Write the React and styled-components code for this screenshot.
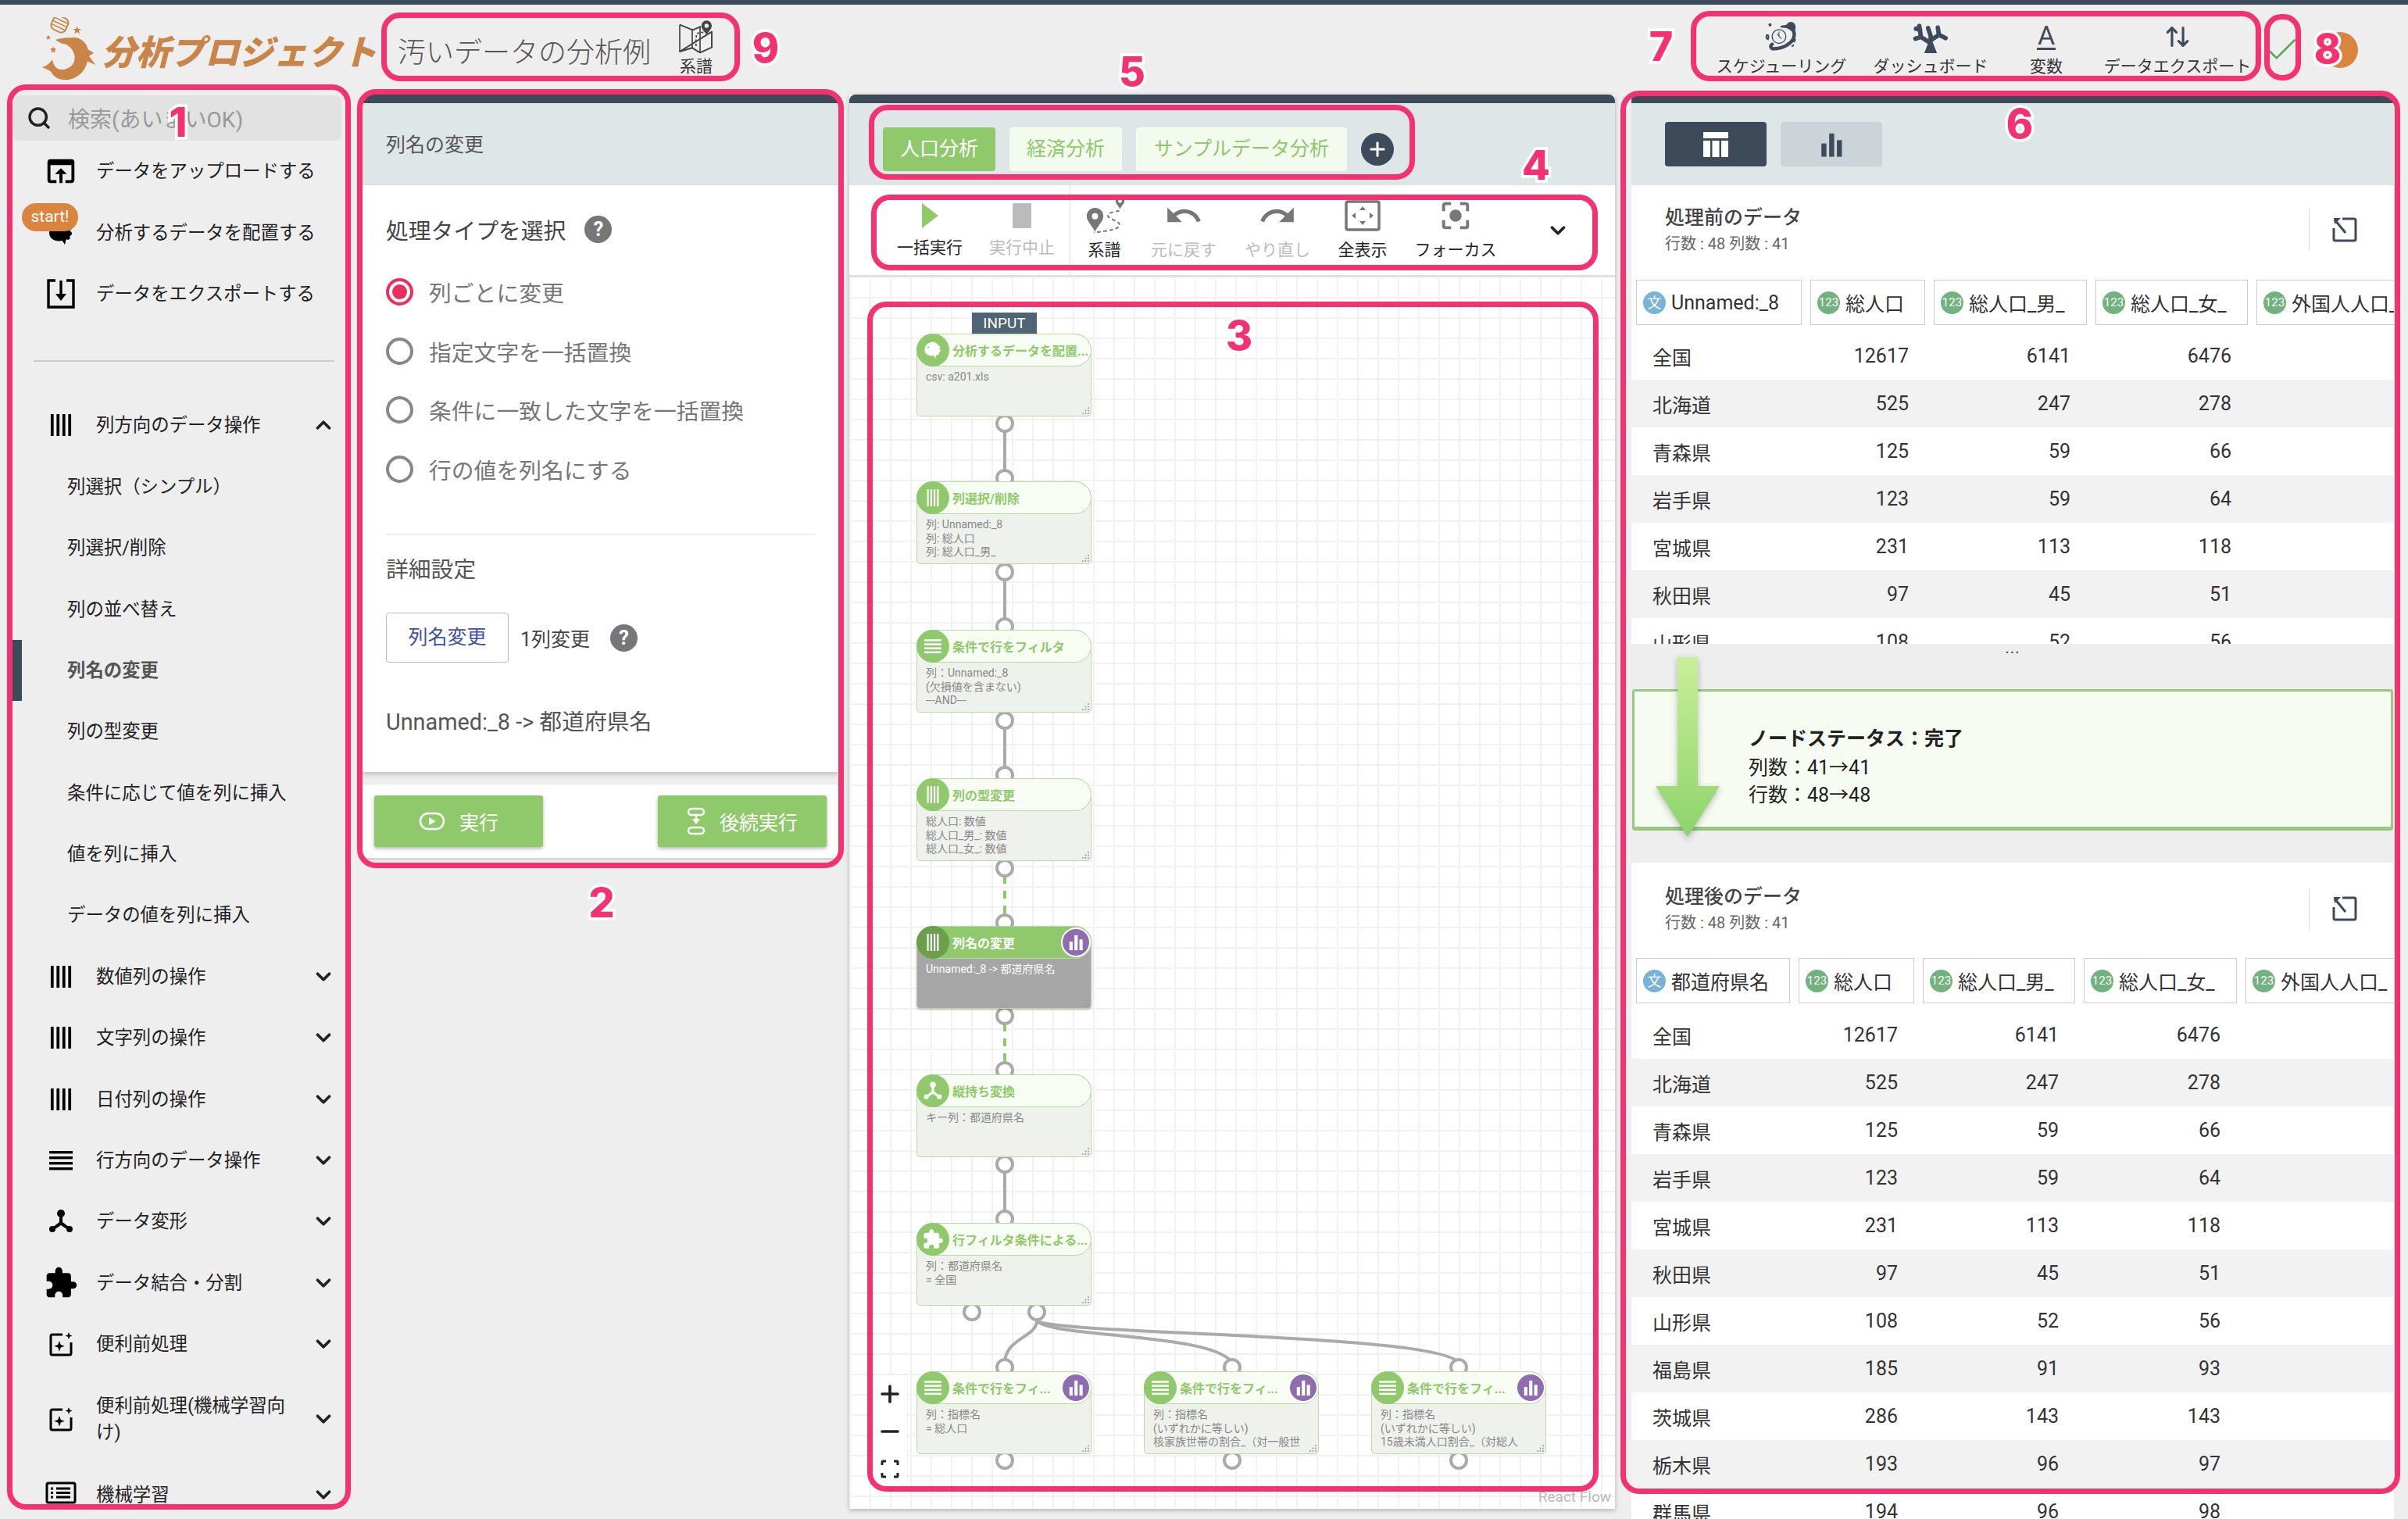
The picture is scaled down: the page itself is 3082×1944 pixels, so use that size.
import React from 'react'
import styled, { createGlobalStyle } from 'styled-components'
import { ChevronDown, ChevronUp, Plus, Minus, Check, ArrowUpDown, Search } from 'lucide-react'
import { MdOpenInBrowser, MdUndo, MdRedo, MdCenterFocusStrong, MdExtension } from 'react-icons/md'

const Global = createGlobalStyle`
  html, body { margin:0; padding:0; background:#eeeeee; }
  body { font-family:Roboto, "Noto Sans CJK JP", sans-serif; color:#222; overflow:hidden; }
  * { box-sizing:border-box; }
`

const DARK = '#3d4a59'
const GREEN = '#8fc96b'
const PINK = '#f5326f'

const Page = styled.div`
  position:relative;
  width:3082px;
  height:1944px;
  overflow:hidden;
  display:flex;
  flex-direction:column;
  background:#eeeeee;
`
const TopStrip = styled.div`
  height:6px;
  flex:none;
  background:${DARK};
`
const Header = styled.header`
  height:115px;
  flex:none;
  display:flex;
  align-items:center;
  padding:0 64px 0 46px;
`
const LogoText = styled.div`
  width:379px;
  font-size:44px;
  font-weight:900;
  font-style:italic;
  color:#c98548;
  white-space:nowrap;
`
const ProjectTitle = styled.div`
  width:343px;
  font-size:36px;
  font-weight:300;
  color:#555;
  white-space:nowrap;
`
const HeadTool = styled.div`
  width:${p => p.$w}px;
  padding-bottom:4px;
  display:flex;
  flex-direction:column;
  align-items:center;
  font-size:21px;
  line-height:30px;
  color:#333;
  white-space:nowrap;
`
const HeadIcon = styled.div`
  height:46px;
  display:flex;
  align-items:center;
  justify-content:center;
  color:${DARK};
`
const LetterIcon = styled.span`
  font-size:34px;
  line-height:32px;
  color:${DARK};
  border-bottom:3px solid ${DARK};
  padding:0 1px;
`
const HeadTools = styled.div`
  margin-left:auto;
  display:flex;
  align-items:center;
`
const Avatar = styled.div`
  width:46px;
  height:46px;
  margin-left:35px;
  border-radius:50%;
  background:#d9843f;
`
const CheckSlot = styled.div`
  width:34px;
  display:flex;
  justify-content:center;
  color:#4fa85a;
  svg { flex:none; }
`
const Main = styled.main`
  flex:1;
  min-height:0;
  display:flex;
  padding-left:14px;
`

/* sidebar */
const Sidebar = styled.nav`
  width:436px;
  flex:none;
  padding-top:1px;
`
const SearchBox = styled.div`
  height:58px;
  margin:0 13px 0 3px;
  display:flex;
  align-items:center;
  gap:21px;
  padding-left:17px;
  background:#e2e2e2;
  border-radius:8px;
  color:#999;
  font-size:28px;
  white-space:nowrap;
  svg { color:#222; }
`
const MenuRow = styled.div`
  position:relative;
  height:${p => p.$h || 78.4}px;
  display:flex;
  align-items:center;
  padding-right:21px;
  border-left:14px solid ${p => (p.$active ? DARK : 'transparent')};
  font-size:23.4px;
  line-height:34px;
  color:${p => (p.$active ? '#555' : '#222')};
  font-weight:${p => (p.$active ? 700 : 400)};
`
const MenuIcon = styled.div`
  width:60px;
  flex:none;
  display:flex;
  justify-content:center;
  margin-right:15px;
  margin-left:20px;
  color:#000;
`
const MenuLabel = styled.div`
  flex:1;
  white-space:${p => (p.$wrap ? 'normal' : 'nowrap')};
  padding-left:${p => (p.$sub ? 58 : 0)}px;
  padding-right:${p => (p.$wrap ? 8 : 0)}px;
`
const MenuRule = styled.hr`
  height:2px;
  border:none;
  margin:46px 22px 42px 29px;
  background:#cccccc;
`
const StartBadge = styled.div`
  position:absolute;
  left:0;
  top:2px;
  width:72px;
  height:36px;
  border-radius:18px;
  background:#d9843f;
  color:#fff;
  font-size:21px;
  line-height:35px;
  text-align:center;
  z-index:1;
`

/* settings panel */
const PanelHead = styled.div`
  height:116px;
  flex:none;
  border-top:11px solid ${DARK};
  border-radius:8px 8px 0 0;
  background:#dfe6e8;
`
const SettingsColumn = styled.section`
  width:609px;
  margin-left:14px;
  flex:none;
`
const SettingsHead = styled(PanelHead)`
  display:flex;
  align-items:center;
  padding-left:30px;
  padding-bottom:4px;
  font-size:25px;
  color:#555;
`
const SettingsBody = styled.div`
  height:751px;
  padding:34px 30px 0;
  background:#fff;
  box-shadow:0 3px 6px rgba(0,0,0,.2);
`
const TypeTitle = styled.div`
  display:flex;
  align-items:center;
  gap:24px;
  height:44px;
  font-size:28.8px;
  color:#444;
`
const HelpDot = styled.span`
  width:35px;
  height:35px;
  margin-left:${p => p.$left || 0}px;
  border-radius:50%;
  background:#777;
  color:#fff;
  font-size:26px;
  font-weight:700;
  line-height:35px;
  text-align:center;
  flex:none;
`
const RadioList = styled.div`
  margin-top:21px;
`
const RadioRow = styled.div`
  height:75.5px;
  display:flex;
  align-items:center;
  gap:20px;
  font-size:28.8px;
  color:#777;
`
const RadioMark = styled.span`
  width:35px;
  height:35px;
  flex:none;
  border-radius:50%;
  border:4px solid ${p => (p.$on ? '#e8305f' : '#888')};
  display:flex;
  align-items:center;
  justify-content:center;
  &::after {
    content:'';
    width:19px;
    height:19px;
    border-radius:50%;
    background:${p => (p.$on ? '#e8305f' : 'transparent')};
  }
`
const Rule = styled.hr`
  height:2px;
  border:none;
  margin:45px 0 0;
  background:#eeeeee;
`
const DetailTitle = styled.div`
  margin-top:24px;
  height:40px;
  line-height:40px;
  font-size:28.8px;
  color:#555;
`
const DetailRow = styled.div`
  margin-top:35px;
  display:flex;
  align-items:center;
  font-size:25px;
  color:#444;
`
const OutlineButton = styled.div`
  width:157px;
  height:64px;
  margin-right:15px;
  border:1px solid #bbb;
  border-radius:4px;
  color:#3f51a5;
  line-height:62px;
  text-align:center;
`
const RenameText = styled.div`
  margin-top:56px;
  line-height:40px;
  font-size:28.8px;
  color:#555;
`
const SettingsFoot = styled.div`
  margin-top:16px;
  height:94px;
  padding:14px 15px;
  display:flex;
  justify-content:space-between;
  background:#fff;
  box-shadow:0 2px 3px rgba(0,0,0,.15);
`
const RunButton = styled.div`
  width:216px;
  height:66px;
  display:flex;
  align-items:center;
  justify-content:center;
  gap:18px;
  border-radius:3px;
  background:${GREEN};
  color:#fff;
  font-size:25px;
  box-shadow:0 2px 5px rgba(0,0,0,.3);
`

/* flow canvas */
const FlowColumn = styled.section`
  width:980px;
  margin-left:14px;
  flex:none;
  display:flex;
  flex-direction:column;
  height:1810px;
  background:#fff;
  box-shadow:0 2px 6px rgba(0,0,0,.25);
`
const TabBar = styled(PanelHead)`
  display:flex;
  align-items:center;
  gap:18px;
  padding:13px 0 0 43px;
`
const Tab = styled.div`
  width:${p => p.$w}px;
  height:56px;
  border-radius:4px;
  background:${p => (p.$active ? GREEN : '#f3faee')};
  color:${p => (p.$active ? '#fff' : GREEN)};
  font-size:25px;
  line-height:55px;
  text-align:center;
`
const AddTab = styled.div`
  width:42px;
  height:42px;
  border-radius:50%;
  background:${DARK};
  color:#fff;
  display:flex;
  align-items:center;
  justify-content:center;
`
const Toolbar = styled.div`
  height:117px;
  flex:none;
  display:flex;
  border-bottom:2px solid #ddd;
`
const ToolGroup = styled.div`
  display:flex;
  padding-left:${p => p.$pad || 0}px;
  width:${p => p.$w}px;
  ${p => p.$divide && 'border-right:1px solid #ddd;'}
`
const ToolItem = styled.div`
  width:${p => p.$w}px;
  padding-top:13px;
  display:flex;
  flex-direction:column;
  align-items:center;
  white-space:nowrap;
  font-size:21px;
  line-height:30px;
  color:${p => (p.$off ? '#bbb' : '#222')};
`
const ToolIcon = styled.div`
  height:52px;
  display:flex;
  align-items:center;
  justify-content:center;
  color:${p => p.$color || '#777'};
  margin-bottom:${p => p.$low || 0}px;
`
const ToolChevron = styled.div`
  margin-left:44px;
  align-self:center;
  color:#222;
  display:flex;
`
const Canvas = styled.div`
  position:relative;
  flex:1;
  overflow:hidden;
  background-color:#fff;
  background-image:
    linear-gradient(#f2f2f2 2px, transparent 2px),
    linear-gradient(90deg, #f2f2f2 2px, transparent 2px);
  background-size:26px 26px;
`
const EdgeLayer = styled.svg`
  position:absolute;
  left:0;
  top:0;
  width:100%;
  height:100%;
`
const Handle = styled.div`
  position:absolute;
  left:${p => p.$x - 12}px;
  top:${p => p.$y - 12}px;
  width:24px;
  height:24px;
  border-radius:50%;
  border:4px solid #aaa;
  background:#fff;
`
const NodeBox = styled.div`
  position:absolute;
  left:${p => p.$x}px;
  top:${p => p.$y}px;
  width:224px;
  height:106px;
  border:1px solid #b9d9a6;
  border-radius:21px 21px 5px 5px;
  background:${p => (p.$on ? '#a6a6a6' : '#eff1ed')};
  color:${p => (p.$on ? '#fff' : '#888')};
  box-shadow:${p => (p.$on ? '0 1px 3px rgba(0,0,0,.3)' : 'none')};
`
const NodeHead = styled.div`
  height:42px;
  margin:-1px -1px 0;
  display:flex;
  align-items:center;
  gap:4px;
  border:1px solid #b9d9a6;
  border-radius:21px;
  background:${p => (p.$on ? GREEN : '#f7fdf2')};
  color:${p => (p.$on ? '#fff' : GREEN)};
  font-size:16px;
  font-weight:700;
  white-space:nowrap;
`
const NodeIcon = styled.div`
  width:42px;
  height:42px;
  margin:-1px 0 -1px -1px;
  flex:none;
  border-radius:50%;
  background:${p => (p.$on ? '#6b9f4c' : GREEN)};
  color:#fff;
  display:flex;
  align-items:center;
  justify-content:center;
`
const ChartBadge = styled.div`
  width:38px;
  height:38px;
  margin-left:auto;
  flex:none;
  border-radius:50%;
  border:2px solid #fff;
  background:#8e6cb0;
  color:#fff;
  display:flex;
  align-items:center;
  justify-content:center;
`
const NodeText = styled.div`
  padding:5px 0 0 11px;
  font-size:14px;
  line-height:17.5px;
  white-space:nowrap;
  overflow:hidden;
  margin-right:18px;
`
const NodeGrip = styled.svg`
  position:absolute;
  right:1px;
  bottom:1px;
`
const InputTag = styled.div`
  position:absolute;
  left:157px;
  top:46px;
  width:83px;
  height:27px;
  background:#4f6474;
  color:#fff;
  font-size:19px;
  line-height:27px;
  text-align:center;
`
const ZoomControls = styled.div`
  position:absolute;
  left:30px;
  top:1406px;
  width:44px;
  height:144px;
  display:flex;
  flex-direction:column;
  background:#fff;
  box-shadow:0 0 2px rgba(0,0,0,.1);
`
const ZoomButton = styled.div`
  flex:1;
  display:flex;
  align-items:center;
  justify-content:center;
  color:#222;
`
const Attribution = styled.div`
  position:absolute;
  right:5px;
  bottom:4px;
  font-size:19px;
  color:#bbb;
`

/* data panel */
const DataColumn = styled.section`
  width:976px;
  margin-left:21px;
  flex:none;
  position:relative;
  display:flex;
  flex-direction:column;
  overflow:hidden;
`
const ToggleBar = styled(PanelHead)`
  display:flex;
  gap:18px;
  padding:24px 0 0 43px;
`
const ToggleButton = styled.div`
  width:130px;
  height:57px;
  border-radius:4px;
  background:${p => (p.$active ? DARK : '#ccd4da')};
  color:${p => (p.$active ? '#fff' : DARK)};
  display:flex;
  align-items:center;
  justify-content:center;
`
const TableSection = styled.div`
  height:${p => p.$h}px;
  flex:none;
  overflow:hidden;
  background:#fff;
`
const TableHeader = styled.div`
  height:${p => p.$h}px;
  display:flex;
  align-items:center;
  padding:0 47px ${p => p.$bottom}px 43px;
`
const TableTitle = styled.div`
  font-size:25px;
  line-height:34px;
  font-weight:500;
  color:#444;
`
const TableSub = styled.div`
  font-size:20px;
  line-height:28px;
  margin-top:2px;
  color:#666;
`
const ExpandSlot = styled.div`
  margin-left:auto;
  width:32px;
  height:53px;
  border-left:1px solid #ddd;
  padding-left:29px;
  box-sizing:content-box;
  display:flex;
  align-items:center;
  color:${DARK};
`
const HeadRow = styled.div`
  display:flex;
  gap:11px;
  padding-left:6px;
  white-space:nowrap;
`
const ColHead = styled.div`
  width:${p => p.$w}px;
  height:58px;
  flex:none;
  display:flex;
  align-items:center;
  gap:7px;
  padding-left:8px;
  border:1px solid #ccc;
  font-size:25px;
  color:#333;
  overflow:hidden;
`
const TypeBadge = styled.span`
  width:29px;
  height:29px;
  flex:none;
  border-radius:50%;
  background:${p => (p.$text ? '#7ab3d9' : '#72b27f')};
  color:#fff;
  font-size:${p => (p.$text ? 18 : 15)}px;
  line-height:29px;
  text-align:center;
`
const DataRows = styled.div`
  margin-top:${p => p.$top}px;
`
const DataRow = styled.div`
  height:61px;
  display:flex;
  gap:11px;
  padding-left:6px;
  align-items:center;
  font-size:25px;
  color:#333;
  &:nth-child(even) { background:#f2f2f2; }
`
const DataCell = styled.div`
  width:${p => p.$w}px;
  flex:none;
  padding:0 21px;
  text-align:${p => (p.$num ? 'right' : 'left')};
`
const StatusArea = styled.div`
  position:relative;
  height:280px;
  flex:none;
  padding-top:58px;
`
const Ellipsis = styled.div`
  position:absolute;
  left:0;
  right:0;
  top:-5px;
  text-align:center;
  font-size:20px;
  line-height:20px;
  letter-spacing:1px;
  color:#444;
`
const StatusBox = styled.div`
  height:181px;
  margin:0 1px;
  padding:18px 0 0 146px;
  display:flex;
  flex-direction:column;
  justify-content:center;
  background:#f6fcf2;
  border:3px solid #98c97f;
  border-bottom-width:5px;
  border-radius:4px;
  font-size:25px;
  line-height:35px;
  color:#222;
`
const StatusTitle = styled.div`
  font-weight:700;
  line-height:38px;
`
const StatusArrow = styled.svg`
  position:absolute;
  left:22px;
  top:1px;
  filter:drop-shadow(0 3px 4px rgba(0,0,0,.25));
`

/* annotations */
const Mark = styled.div`
  position:absolute;
  left:${p => p.$x}px;
  top:${p => p.$y}px;
  width:${p => p.$w}px;
  height:${p => p.$h}px;
  border:7px solid ${PINK};
  border-radius:${p => p.$r || 24}px;
  pointer-events:none;
`
const MarkNumber = styled.div`
  position:absolute;
  left:${p => p.$x}px;
  top:${p => p.$y}px;
  transform:translate(-50%, -50%);
  font-family:Inter, sans-serif;
  font-size:52px;
  font-weight:800;
  line-height:1;
  color:${PINK};
  -webkit-text-stroke:7px #fff;
  paint-order:stroke fill;
`

/* drawings */
const Columns = ({ size = 30, height }) => (
  <svg width={size} height={height || size} viewBox="0 0 30 30" preserveAspectRatio="none" fill="currentColor">
    <rect x="1" y="0" width="4" height="30" /><rect x="9" y="0" width="4" height="30" />
    <rect x="17" y="0" width="4" height="30" /><rect x="25" y="0" width="4" height="30" />
  </svg>
)
const Rows = ({ size = 30 }) => (
  <svg width={size} height={size} viewBox="0 0 30 30" fill="currentColor">
    <rect x="0" y="3" width="30" height="3.4" /><rect x="0" y="10" width="30" height="3.4" />
    <rect x="0" y="17" width="30" height="3.4" /><rect x="0" y="24" width="30" height="3.4" />
  </svg>
)
const Branch = ({ size = 34 }) => (
  <svg width={size} height={size} viewBox="0 0 34 34" fill="currentColor">
    <circle cx="17" cy="7" r="5" /><circle cx="6" cy="27" r="4" /><circle cx="28" cy="27" r="4" />
    <path d="M15 10h4v8l9 7-2 3-9-6-9 6-2-3 9-7z" />
  </svg>
)
const Sunfish = ({ size = 30, eye = 'transparent' }) => (
  <svg width={size} height={size} viewBox="0 0 24 24" fill="currentColor">
    <path d="M3 12C3 6 8 3 13 3c2 0 2 2 4 2 1 1 0 2 2 2.500 2 .5 1 2.500-.5 3 2.500.5 2.500 3.500 0 4 1.500 1.500-.5 3.500-2.500 2.500l-1 4-2-3c-5 1-10-1-10-6z" />
    <circle cx="7" cy="9" r="1" fill={eye} />
  </svg>
)
const Sparkle = () => (
  <svg width="34" height="34" viewBox="0 0 34 34" fill="none" stroke="currentColor" strokeWidth="3">
    <path d="M19 5H6a2 2 0 0 0-2 2v22a2 2 0 0 0 2 2h22a2 2 0 0 0 2-2V15" />
    <path fill="currentColor" stroke="none" d="M15 13l1.800 5 5 1.800-5 1.800-1.800 5-1.800-5-5-1.800 5-1.800zM27 2l1.200 3.300 3.300 1.200-3.300 1.200L27 11l-1.200-3.300-3.300-1.200 3.300-1.200z" />
  </svg>
)
const Monitor = () => (
  <svg width="40" height="34" viewBox="0 0 40 34" fill="none" stroke="currentColor" strokeWidth="3">
    <rect x="2" y="2" width="36" height="25" rx="2" />
    <path d="M13 31h14" strokeWidth="4" />
    <path d="M14 9h18M14 14.500h18M14 20h18M7 9h3M7 14.500h3M7 20h3" />
  </svg>
)
const ExportBox = () => (
  <svg width="38" height="40" viewBox="0 0 38 40" fill="none" stroke="currentColor" strokeWidth="3.400">
    <path d="M12 3H3v34h32V3h-9" />
    <path d="M19 3v20" />
    <path fill="currentColor" stroke="none" d="M12 20h14l-7 9z" />
  </svg>
)
const Bars = ({ size = 22 }) => (
  <svg width={size} height={size} viewBox="0 0 24 24" fill="currentColor">
    <rect x="3" y="11" width="4.500" height="12" /><rect x="10" y="2" width="4.500" height="21" /><rect x="17" y="8" width="4.500" height="15" />
  </svg>
)
const TableGlyph = () => (
  <svg width="36" height="36" viewBox="0 0 36 36" fill="currentColor">
    <path d="M3 2h30a1 1 0 0 1 1 1v7H2V3a1 1 0 0 1 1-1z" />
    <path d="M2 13h9v21H3a1 1 0 0 1-1-1zM13.500 13h9v21h-9zM25 13h9v20a1 1 0 0 1-1 1h-8z" />
  </svg>
)
const Expand = () => (
  <svg width="32" height="32" viewBox="0 0 32 32" fill="none" stroke="currentColor" strokeWidth="3">
    <path d="M13 2h15a2 2 0 0 1 2 2v24a2 2 0 0 1-2 2H4a2 2 0 0 1-2-2V14" />
    <path d="M3 3l14 17" />
    <path fill="currentColor" stroke="none" d="M2 1h9L3 9z" />
  </svg>
)
const Logo = () => (
  <svg width="84" height="84" viewBox="20 30 220 220" fill="#c98548">
    <g transform="rotate(25 100 52)" fill="none" stroke="#c98548" strokeWidth="5">
      <rect x="74" y="28" width="52" height="50" rx="16" />
      <path d="M74 40h52M74 52h52M74 64h52" strokeWidth="4" />
    </g>
    <path d="M158 60l4 9 10 1-8 6 3 10-9-6-9 6 3-10-8-6 10-1zM62 89l2 6 6 1-5 4 2 6-5-4-6 4 2-6-5-4 6-1zM78 128l3 7 8 1-6 5 2 8-7-4-7 4 2-8-6-5 8-1z" />
    <path d="M85 105C105 100 125 98 150 98c25 2 40 22 45 40l19 12-16 10 22 30-28-12c-4 27-27 57-67 62-25 2-45-8-55-28-10-7-20-9-30-15 15-2 25-12 35-25 3 18 13 33 30 34 25 0 45-16 45-41 0-20-15-37-32-45-13 0-23-8-33-15z" />
  </svg>
)
const MapIcon = () => (
  <svg width="50" height="46" viewBox="45 5 150 138" fill="none" stroke="#444" strokeWidth="6">
    <path d="M57 28l50 20 28-12v-3M180 55v60l-45 20-30-18-48 14z" strokeLinejoin="round" />
    <path d="M57 28v103M105 48v70M135 36v98" strokeWidth="5" />
    <path d="M120 110c-2-20 0-35 2-45 4-8 20-8 30-8" strokeDasharray="9 7" strokeWidth="5" />
    <path fill="#444" stroke="none" fillRule="evenodd" d="M160 12a20 20 0 0 1 20 20c0 12-12 22-20 35-8-13-20-23-20-35a20 20 0 0 1 20-20zm0 12a8 8 0 1 0 0 16 8 8 0 0 0 0-16z" />
  </svg>
)
const RouteIcon = () => (
  <svg width="56" height="50" viewBox="40 10 165 150" fill="none" stroke="#777" strokeWidth="6">
    <path d="M178 66c-15 4-42 6-44 18-2 14 46 20 46 36 0 18-50 24-100 30" strokeDasharray="14 10" />
    <path fill="#777" stroke="none" fillRule="evenodd" d="M85 55a32 32 0 0 1 32 32c0 20-22 36-32 60-10-24-32-40-32-60a32 32 0 0 1 32-32zm0 20a12 12 0 1 0 0 24 12 12 0 0 0 0-24z" />
    <path fill="#777" stroke="none" fillRule="evenodd" d="M181 12a17 17 0 0 1 17 17c0 10-11 18-17 31-6-13-17-21-17-31a17 17 0 0 1 17-17zm0 10a7 7 0 1 0 0 14 7 7 0 0 0 0-14z" />
  </svg>
)
const FitIcon = () => (
  <svg width="46" height="40" viewBox="0 0 46 40" fill="#777">
    <rect x="2" y="2" width="42" height="36" rx="2" fill="none" stroke="#777" strokeWidth="3.500" />
    <path d="M23 8l4 5h-8zM23 32l4-5h-8zM9 20l5-4v8zM37 20l-5-4v8z" />
  </svg>
)
const Seahorse = () => (
  <svg width="44" height="42" viewBox="0 0 130 122" fill="none" stroke={DARK}>
    <path d="M98 26c24 14 18 46-3 60-15 14-40 20-55 20-15 3-20-11-10-16" strokeWidth="13" strokeLinecap="round" />
    <path fill={DARK} stroke="none" d="M62 20l22-4c6-12 24-16 32-2 6 12 2 24-8 30-8-8-16-14-26-16l-20-2z" />
    <circle cx="56" cy="60" r="26" strokeWidth="4" />
    <path d="M56 42v18l10 8M50 50l6 10" strokeWidth="3" />
    <circle cx="22" cy="16" r="6" fill={DARK} stroke="none" />
    <path d="M10 55c6-4 8 6 4 16-6-2-8-10-4-16zM118 70l-6 12M112 92l-8 6" strokeWidth="6" />
  </svg>
)
const Coral = () => (
  <svg width="46" height="42" viewBox="0 0 130 118" fill="none" stroke={DARK} strokeWidth="16" strokeLinecap="round" strokeLinejoin="round">
    <path d="M65 105V55M65 82L30 60 10 66M30 60L24 20M27 34L12 30M65 55L56 28M65 72l30-20-4-26M95 52l24 12" />
    <path fill={DARK} stroke="none" d="M42 118h46L74 82H56z" />
  </svg>
)
const PlayPill = () => (
  <svg width="34" height="24" viewBox="0 0 34 24" fill="none" stroke="#fff" strokeWidth="2.500">
    <rect x="2" y="2" width="30" height="20" rx="10" />
    <path fill="#fff" stroke="none" d="M13 7l9 5-9 5z" />
  </svg>
)
const FlowPill = () => (
  <svg width="24" height="36" viewBox="0 0 24 36" fill="none" stroke="#fff" strokeWidth="2.500">
    <rect x="2" y="2" width="20" height="8" rx="4" /><rect x="2" y="26" width="20" height="8" rx="4" />
    <path d="M12 10v6" /><path fill="#fff" stroke="none" d="M7 15h10l-5 7z" />
  </svg>
)

const OX = 1087
const OY = 354
const nodes = [
  { title: '分析するデータを配置...', icon: 'fish', lines: ['csv: a201.xls'], x: 1173, y: 427 },
  { title: '列選択/削除', icon: 'cols', lines: ['列: Unnamed:_8', '列: 総人口', '列: 総人口_男_'], x: 1173, y: 616 },
  { title: '条件で行をフィルタ', icon: 'rows', lines: ['列：Unnamed:_8', '(欠損値を含まない)', '---AND---'], x: 1173, y: 806 },
  { title: '列の型変更', icon: 'cols', lines: ['総人口: 数値', '総人口_男_: 数値', '総人口_女_: 数値'], x: 1173, y: 996 },
  { title: '列名の変更', icon: 'cols', lines: ['Unnamed:_8 -> 都道府県名'], x: 1173, y: 1185, on: true, chart: true },
  { title: '縦持ち変換', icon: 'branch', lines: ['キー列：都道府県名'], x: 1173, y: 1375 },
  { title: '行フィルタ条件による...', icon: 'puzzle', lines: ['列：都道府県名', '= 全国'], x: 1173, y: 1565 },
  { title: '条件で行をフィ...', icon: 'rows', lines: ['列：指標名', '= 総人口'], x: 1173, y: 1755, chart: true },
  { title: '条件で行をフィ...', icon: 'rows', lines: ['列：指標名', '(いずれかに等しい)', '核家族世帯の割合_（対一般世'], x: 1464, y: 1755, chart: true },
  { title: '条件で行をフィ...', icon: 'rows', lines: ['列：指標名', '(いずれかに等しい)', '15歳未満人口割合_（対総人'], x: 1755, y: 1755, chart: true },
]
const nodeIcons = {
  fish: <Sunfish size={28} eye="#8fc96b" />,
  cols: <Columns size={16} height={22} />,
  rows: <Rows size={22} />,
  branch: <Branch size={26} />,
  puzzle: <MdExtension size={28} />,
}
const handles = [
  [1286, 542], [1286, 612], [1286, 732], [1286, 802], [1286, 922], [1286, 992], [1286, 1111], [1286, 1181],
  [1286, 1300], [1286, 1370], [1286, 1490], [1286, 1560], [1244, 1679], [1327, 1679],
  [1286, 1750], [1577, 1750], [1867, 1750], [1286, 1869], [1577, 1869], [1867, 1869],
]
const solidEdges = [[552, 603], [742, 793], [932, 983], [1500, 1551]]
const dashedEdges = [[1121, 1172], [1310, 1361]]
const branchEdges = [
  'M1327 1690C1327 1712 1286 1712 1286 1745',
  'M1327 1690C1340 1712 1560 1706 1577 1745',
  'M1327 1690C1340 1708 1850 1706 1867 1745',
]

const menuTop = [
  { label: 'データをアップロードする', icon: <MdOpenInBrowser size={46} /> },
  { label: '分析するデータを配置する', icon: <Sunfish size={40} />, start: true },
  { label: 'データをエクスポートする', icon: <ExportBox /> },
]
const subItems = ['列選択（シンプル）', '列選択/削除', '列の並べ替え', '列名の変更', '列の型変更', '条件に応じて値を列に挿入', '値を列に挿入', 'データの値を列に挿入']
const menuBottom = [
  { label: '数値列の操作', icon: <Columns size={28} /> },
  { label: '文字列の操作', icon: <Columns size={28} /> },
  { label: '日付列の操作', icon: <Columns size={28} /> },
  { label: '行方向のデータ操作', icon: <Rows size={30} /> },
  { label: 'データ変形', icon: <Branch /> },
  { label: 'データ結合・分割', icon: <MdExtension size={44} /> },
  { label: '便利前処理', icon: <Sparkle /> },
  { label: '便利前処理(機械学習向け)', icon: <Sparkle />, wrap: true, h: 114 },
  { label: '機械学習', icon: <Monitor /> },
]

const beforeHeads = [
  { w: 212, text: 'Unnamed:_8', str: true },
  { w: 147, text: '総人口' },
  { w: 196, text: '総人口_男_' },
  { w: 195, text: '総人口_女_' },
  { w: 220, text: '外国人人口_' },
]
const afterHeads = [
  { w: 197, text: '都道府県名', str: true },
  { w: 148, text: '総人口' },
  { w: 195, text: '総人口_男_' },
  { w: 196, text: '総人口_女_' },
  { w: 220, text: '外国人人口_' },
]
const prefectures = [
  ['全国', 12617, 6141, 6476], ['北海道', 525, 247, 278], ['青森県', 125, 59, 66], ['岩手県', 123, 59, 64],
  ['宮城県', 231, 113, 118], ['秋田県', 97, 45, 51], ['山形県', 108, 52, 56], ['福島県', 185, 91, 93],
  ['茨城県', 286, 143, 143], ['栃木県', 193, 96, 97], ['群馬県', 194, 96, 98],
]

const marks = [
  { x: 9, y: 108, w: 440, h: 1824 },
  { x: 457, y: 114, w: 623, h: 997 },
  { x: 1110, y: 386, w: 936, h: 1523 },
  { x: 1115, y: 249, w: 930, h: 97 },
  { x: 1112, y: 134, w: 699, h: 96 },
  { x: 2074, y: 116, w: 998, h: 1796 },
  { x: 2164, y: 14, w: 730, h: 90 },
  { x: 2898, y: 18, w: 47, h: 85, r: 22 },
  { x: 488, y: 16, w: 459, h: 88 },
]
const markNumbers = [
  [228, 157, 1], [770, 1156, 2], [1586, 430, 3], [1966, 212, 4], [1449, 92, 5],
  [2585, 159, 6], [2126, 60, 7], [2979, 63, 8], [980, 62, 9],
]

const DataTable = ({ heads, rows, top }) => (
  <>
    <HeadRow>
      {heads.map(h => (
        <ColHead key={h.text} $w={h.w}>
          <TypeBadge $text={h.str}>{h.str ? '文' : '123'}</TypeBadge>
          {h.text}
        </ColHead>
      ))}
    </HeadRow>
    <DataRows $top={top}>
      {rows.map(r => (
        <DataRow key={r[0]}>
          <DataCell $w={heads[0].w}>{r[0]}</DataCell>
          <DataCell $w={heads[1].w} $num>{r[1]}</DataCell>
          <DataCell $w={heads[2].w} $num>{r[2]}</DataCell>
          <DataCell $w={heads[3].w} $num>{r[3]}</DataCell>
        </DataRow>
      ))}
    </DataRows>
  </>
)

const TableCaption = ({ title, h, bottom }) => (
  <TableHeader $h={h} $bottom={bottom}>
    <div>
      <TableTitle>{title}</TableTitle>
      <TableSub>行数 : 48 列数 : 41</TableSub>
    </div>
    <ExpandSlot><Expand /></ExpandSlot>
  </TableHeader>
)

const FlowNode = ({ node }) => (
  <NodeBox $x={node.x - OX} $y={node.y - OY} $on={node.on}>
    <NodeHead $on={node.on}>
      <NodeIcon $on={node.on}>{nodeIcons[node.icon]}</NodeIcon>
      {node.title}
      {node.chart && <ChartBadge><Bars /></ChartBadge>}
    </NodeHead>
    <NodeText>{node.lines.map(l => <div key={l}>{l}</div>)}</NodeText>
    <NodeGrip width="11" height="11" viewBox="0 0 11 11" fill="#999">
      <circle cx="9" cy="2" r="1" /><circle cx="9" cy="5.500" r="1" /><circle cx="9" cy="9" r="1" />
      <circle cx="5.500" cy="5.500" r="1" /><circle cx="5.500" cy="9" r="1" /><circle cx="2" cy="9" r="1" />
    </NodeGrip>
  </NodeBox>
)

const App = () => {
  return (
    <Page>
      <Global />
      <TopStrip />
      <Header>
        <Logo />
        <LogoText>分析プロジェクト</LogoText>
        <ProjectTitle>汚いデータの分析例</ProjectTitle>
        <HeadTool $w={78}>
          <HeadIcon><MapIcon /></HeadIcon>
          系譜
        </HeadTool>
        <HeadTools>
          <HeadTool $w={190}><HeadIcon><Seahorse /></HeadIcon>スケジューリング</HeadTool>
          <HeadTool $w={192}><HeadIcon><Coral /></HeadIcon>ダッシュボード</HeadTool>
          <HeadTool $w={104}><HeadIcon><LetterIcon>A</LetterIcon></HeadIcon>変数</HeadTool>
          <HeadTool $w={232}><HeadIcon><ArrowUpDown size={34} strokeWidth={2.2} /></HeadIcon>データエクスポート</HeadTool>
          <CheckSlot><Check size={50} strokeWidth={1.2} /></CheckSlot>
          <Avatar />
        </HeadTools>
      </Header>
      <Main>
        <Sidebar>
          <SearchBox><Search size={32} strokeWidth={2.6} />検索(あいまいOK)</SearchBox>
          {menuTop.map(m => (
            <MenuRow key={m.label}>
              {m.start && <StartBadge>start!</StartBadge>}
              <MenuIcon>{m.icon}</MenuIcon>
              <MenuLabel>{m.label}</MenuLabel>
            </MenuRow>
          ))}
          <MenuRule />
          <MenuRow>
            <MenuIcon><Columns size={28} /></MenuIcon>
            <MenuLabel>列方向のデータ操作</MenuLabel>
            <ChevronUp size={30} strokeWidth={3} />
          </MenuRow>
          {subItems.map(s => (
            <MenuRow key={s} $active={s === '列名の変更'}>
              <MenuLabel $sub>{s}</MenuLabel>
            </MenuRow>
          ))}
          {menuBottom.map(m => (
            <MenuRow key={m.label} $h={m.h}>
              <MenuIcon>{m.icon}</MenuIcon>
              <MenuLabel $wrap={m.wrap}>{m.label}</MenuLabel>
              <ChevronDown size={30} strokeWidth={3} />
            </MenuRow>
          ))}
        </Sidebar>

        <SettingsColumn>
          <SettingsHead>列名の変更</SettingsHead>
          <SettingsBody>
            <TypeTitle>処理タイプを選択<HelpDot>?</HelpDot></TypeTitle>
            <RadioList>
              <RadioRow><RadioMark $on />列ごとに変更</RadioRow>
              <RadioRow><RadioMark />指定文字を一括置換</RadioRow>
              <RadioRow><RadioMark />条件に一致した文字を一括置換</RadioRow>
              <RadioRow><RadioMark />行の値を列名にする</RadioRow>
            </RadioList>
            <Rule />
            <DetailTitle>詳細設定</DetailTitle>
            <DetailRow>
              <OutlineButton>列名変更</OutlineButton>
              1列変更
              <HelpDot $left={26}>?</HelpDot>
            </DetailRow>
            <RenameText>Unnamed:_8 -&gt; 都道府県名</RenameText>
          </SettingsBody>
          <SettingsFoot>
            <RunButton><PlayPill />実行</RunButton>
            <RunButton><FlowPill />後続実行</RunButton>
          </SettingsFoot>
        </SettingsColumn>

        <FlowColumn>
          <TabBar>
            <Tab $active $w={144}>人口分析</Tab>
            <Tab $w={144}>経済分析</Tab>
            <Tab $w={270}>サンプルデータ分析</Tab>
            <AddTab><Plus size={28} strokeWidth={2.6} /></AddTab>
          </TabBar>
          <Toolbar>
            <ToolGroup $w={283} $pad={44} $divide>
              <ToolItem $w={118}>
                <ToolIcon $color={GREEN}><svg width="24" height="36" viewBox="0 0 24 36" fill="currentColor"><path d="M2 2l21 16L2 34z" /></svg></ToolIcon>
                一括実行
              </ToolItem>
              <ToolItem $w={118} $off>
                <ToolIcon $color="#bbb"><svg width="24" height="32" viewBox="0 0 24 32" fill="currentColor"><rect width="24" height="32" /></svg></ToolIcon>
                実行中止
              </ToolItem>
            </ToolGroup>
            <ToolItem $w={87}><ToolIcon $low={3}><RouteIcon /></ToolIcon>系譜</ToolItem>
            <ToolItem $w={116} $off><ToolIcon $low={3}><MdUndo size={50} /></ToolIcon>元に戻す</ToolItem>
            <ToolItem $w={124} $off><ToolIcon $low={3}><MdRedo size={50} /></ToolIcon>やり直し</ToolItem>
            <ToolItem $w={94}><ToolIcon $low={3}><FitIcon /></ToolIcon>全表示</ToolItem>
            <ToolItem $w={144}><ToolIcon $low={3}><MdCenterFocusStrong size={46} /></ToolIcon>フォーカス</ToolItem>
            <ToolChevron><ChevronDown size={30} strokeWidth={3} /></ToolChevron>
          </Toolbar>
          <Canvas>
            <EdgeLayer viewBox={`${OX} ${OY} 980 1577`} preserveAspectRatio="xMinYMin slice" fill="none">
              {solidEdges.map(e => <line key={e[0]} x1="1286" x2="1286" y1={e[0]} y2={e[1]} stroke="#aaa" strokeWidth="4" />)}
              {dashedEdges.map(e => <line key={e[0]} x1="1286" x2="1286" y1={e[0]} y2={e[1]} stroke={GREEN} strokeWidth="4" strokeDasharray="10 9" />)}
              {branchEdges.map(d => <path key={d} d={d} stroke="#aaa" strokeWidth="4" />)}
            </EdgeLayer>
            {handles.map(h => <Handle key={h.join()} $x={h[0] - OX} $y={h[1] - OY} />)}
            <InputTag>INPUT</InputTag>
            {nodes.map(n => <FlowNode key={`${n.x}-${n.y}`} node={n} />)}
            <ZoomControls>
              <ZoomButton><Plus size={34} strokeWidth={2.6} /></ZoomButton>
              <ZoomButton><Minus size={34} strokeWidth={2.6} /></ZoomButton>
              <ZoomButton>
                <svg width="24" height="24" viewBox="0 0 24 24" fill="none" stroke="currentColor" strokeWidth="3"><path d="M2 7V3a1 1 0 0 1 1-1h4M17 2h4a1 1 0 0 1 1 1v4M22 17v4a1 1 0 0 1-1 1h-4M7 22H3a1 1 0 0 1-1-1v-4" /></svg>
              </ZoomButton>
            </ZoomControls>
            <Attribution>React Flow</Attribution>
          </Canvas>
        </FlowColumn>

        <DataColumn>
          <ToggleBar>
            <ToggleButton $active><TableGlyph /></ToggleButton>
            <ToggleButton><Bars size={34} /></ToggleButton>
          </ToggleBar>
          <TableSection $h={587}>
            <TableCaption title="処理前のデータ" h={121} bottom={8} />
            <DataTable heads={beforeHeads} rows={prefectures.slice(0, 7)} top={9} />
          </TableSection>
          <StatusArea>
            <Ellipsis>...</Ellipsis>
            <StatusBox>
              <StatusTitle>ノードステータス：完了</StatusTitle>
              <div>列数：41→41</div>
              <div>行数：48→48</div>
            </StatusBox>
            <StatusArrow width="100" height="250" viewBox="0 0 100 250">
              <defs>
                <linearGradient id="arrowFill" x1="0" y1="0" x2="0" y2="1">
                  <stop offset="0" stopColor="#c8ef9a" />
                  <stop offset="1" stopColor="#8dd46a" />
                </linearGradient>
              </defs>
              <path fill="url(#arrowFill)" d="M37 16h26v165h28l-41 65-41-65h28z" />
            </StatusArrow>
          </StatusArea>
          <TableSection $h={840}>
            <TableCaption title="処理後のデータ" h={122} bottom={4} />
            <DataTable heads={afterHeads} rows={prefectures} top={10} />
          </TableSection>
        </DataColumn>
      </Main>
      {marks.map(m => <Mark key={m.x} $x={m.x} $y={m.y} $w={m.w} $h={m.h} $r={m.r} />)}
      {markNumbers.map(n => <MarkNumber key={n[2]} $x={n[0]} $y={n[1]}>{n[2]}</MarkNumber>)}
    </Page>
  )
}

export default App
